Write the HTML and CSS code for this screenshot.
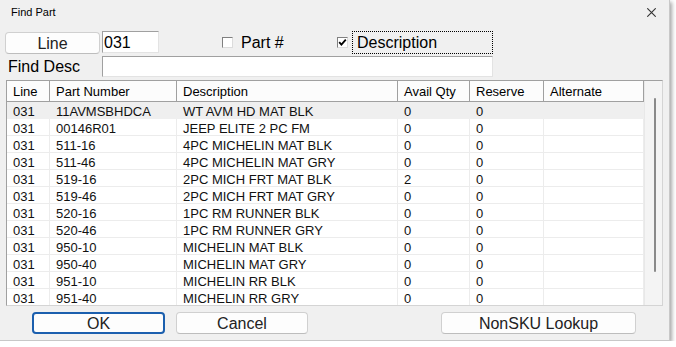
FILE: index.html
```html
<!DOCTYPE html>
<html lang="en">
<head>
    <meta charset="UTF-8">
    <title>Find Part</title>
    <link rel="stylesheet" href="styles.css">
</head>
<body>
    <div class="window">
        <div class="titlebar">
            <span class="title">Find Part</span>
            <svg class="close" width="9" height="9" viewBox="0 0 9 9">
                <path d="M0.3 0.3L8.7 8.7M8.7 0.3L0.3 8.7" stroke="#333" stroke-width="1.1" fill="none"/>
            </svg>
        </div>

        <div class="search-row">
            <button class="btn line-btn">Line</button>
            <input class="field line-field" value="031">
            <div class="check check-part">
                <span class="box"></span>
                <span class="check-text">Part #</span>
            </div>
            <div class="check check-desc">
                <span class="box">
                    <svg width="9" height="9" viewBox="0 0 9 9">
                        <path d="M1.2 4.2L3.4 6.6L7.8 1.6" stroke="#000" stroke-width="1.8" fill="none"/>
                    </svg>
                </span>
                <span class="check-text focus">Description</span>
            </div>
        </div>

        <div class="search-row desc-row">
            <span class="find-label">Find Desc</span>
            <input class="field desc-field" value="">
        </div>

        <div class="grid">
            <div class="grid-main">
                <table class="parts">
                    <colgroup>
                        <col style="width:43px">
                        <col style="width:127px">
                        <col style="width:221px">
                        <col style="width:72px">
                        <col style="width:74px">
                        <col style="width:100px">
                    </colgroup>
                    <thead>
                        <tr>
                            <th>Line</th>
                            <th>Part Number</th>
                            <th>Description</th>
                            <th>Avail Qty</th>
                            <th>Reserve</th>
                            <th>Alternate</th>
                        </tr>
                    </thead>
                    <tbody>
                        <tr class="selected"><td>031</td><td>11AVMSBHDCA</td><td>WT AVM HD MAT BLK</td><td>0</td><td>0</td><td></td></tr>
                        <tr><td>031</td><td>00146R01</td><td>JEEP ELITE 2 PC FM</td><td>0</td><td>0</td><td></td></tr>
                        <tr><td>031</td><td>511-16</td><td>4PC MICHELIN MAT BLK</td><td>0</td><td>0</td><td></td></tr>
                        <tr><td>031</td><td>511-46</td><td>4PC MICHELIN MAT GRY</td><td>0</td><td>0</td><td></td></tr>
                        <tr><td>031</td><td>519-16</td><td>2PC MICH FRT MAT BLK</td><td>2</td><td>0</td><td></td></tr>
                        <tr><td>031</td><td>519-46</td><td>2PC MICH FRT MAT GRY</td><td>0</td><td>0</td><td></td></tr>
                        <tr><td>031</td><td>520-16</td><td>1PC RM RUNNER BLK</td><td>0</td><td>0</td><td></td></tr>
                        <tr><td>031</td><td>520-46</td><td>1PC RM RUNNER GRY</td><td>0</td><td>0</td><td></td></tr>
                        <tr><td>031</td><td>950-10</td><td>MICHELIN MAT BLK</td><td>0</td><td>0</td><td></td></tr>
                        <tr><td>031</td><td>950-40</td><td>MICHELIN MAT GRY</td><td>0</td><td>0</td><td></td></tr>
                        <tr><td>031</td><td>951-10</td><td>MICHELIN RR BLK</td><td>0</td><td>0</td><td></td></tr>
                        <tr><td>031</td><td>951-40</td><td>MICHELIN RR GRY</td><td>0</td><td>0</td><td></td></tr>
                    </tbody>
                </table>
            </div>
            <div class="scroll">
                <div class="thumb"></div>
            </div>
        </div>

        <div class="actions">
            <button class="btn ok-btn">OK</button>
            <button class="btn cancel-btn">Cancel</button>
            <button class="btn nonsku-btn">NonSKU Lookup</button>
        </div>
    </div>
</body>
</html>
```

FILE: styles.css
```css
body {
    margin: 0;
    background: #fff;
    font-family: "Liberation Sans", Arial, sans-serif;
    color: #000;
}
.window {
    width: 670px;
    height: 341px;
    box-sizing: border-box;
    background: #f0f0f0;
    border-right: 1px solid #c8c8c8;
    border-bottom: 1px solid #c8c8c8;
    box-shadow: 2px 2px 4px rgba(0,0,0,0.35);
    display: flex;
    flex-direction: column;
}
.titlebar {
    height: 31px;
    display: flex;
    align-items: flex-start;
    flex-shrink: 0;
}
.title {
    font-size: 11px;
    line-height: 14px;
    margin: 5px 0 0 11px;
}
.close {
    margin: 8px 13px 0 auto;
}

/* search rows */
.search-row {
    display: flex;
    align-items: flex-start;
    height: 23px;
    padding-left: 5px;
    flex-shrink: 0;
}
.btn {
    box-sizing: border-box;
    height: 22px;
    padding: 2px 0 0;
    background: #fdfdfd;
    border: 1px solid #d0d0d0;
    border-bottom-color: #bdbdbd;
    border-radius: 4px;
    font-family: "Liberation Sans", Arial, sans-serif;
    font-size: 16px;
    line-height: 18px;
    color: #222;
}
.line-btn {
    width: 95px;
    margin-top: 1px;
}
.field {
    box-sizing: border-box;
    height: 22px;
    margin: 0;
    padding: 1px 1px 0;
    background: #fff;
    border: 1px solid #e3e3e3;
    border-top-color: #a0a0a0;
    border-left-color: #a0a0a0;
    font-family: "Liberation Sans", Arial, sans-serif;
    font-size: 16px;
    color: #000;
    outline: none;
}
.line-field {
    width: 57px;
    margin-left: 2px;
}
.check {
    display: flex;
    align-items: center;
    height: 23px;
    font-size: 16px;
}
.check-part {
    width: 115px;
    margin-left: 63px;
}
.box {
    box-sizing: border-box;
    width: 11px;
    height: 11px;
    background: #fff;
    border: 1px solid #dcdcdc;
    border-top-color: #808080;
    border-left-color: #808080;
    display: flex;
    align-items: center;
    justify-content: center;
}
.check-part .check-text {
    margin-left: 8px;
}
.check-text.focus {
    box-sizing: border-box;
    width: 141px;
    height: 23px;
    margin-left: 4px;
    padding-left: 4px;
    border: 1px dotted #000;
    line-height: 21px;
}
.desc-row {
    margin-top: 2px;
    height: 21px;
}
.find-label {
    width: 94px;
    padding-left: 3px;
    font-size: 16px;
    line-height: 22px;
}
.desc-field {
    width: 391px;
    height: 21px;
}

/* grid */
.grid {
    box-sizing: border-box;
    width: 657px;
    height: 226px;
    margin: 3px 0 0 6px;
    border: 1px solid #d4d4d4;
    border-top-color: #a0a0a0;
    border-left-color: #a0a0a0;
    background: #fff;
    display: flex;
    flex-shrink: 0;
}
.grid-main {
    width: 637px;
    overflow: hidden;
}
.parts {
    table-layout: fixed;
    width: 637px;
    border-collapse: separate;
    border-spacing: 0;
    font-size: 13px;
}
.parts th {
    box-sizing: border-box;
    height: 21px;
    padding: 1px 6px 0;
    background: #fcfcfc;
    border-right: 1px solid #a0a0a0;
    border-bottom: 1px solid #a0a0a0;
    font-weight: normal;
    text-align: left;
    white-space: nowrap;
    line-height: 19px;
}
.parts td {
    box-sizing: border-box;
    height: 17px;
    padding: 3px 6px 0;
    border-right: 1px solid #ececec;
    border-bottom: 1px solid #ececec;
    line-height: 13px;
    white-space: nowrap;
    overflow: hidden;
    color: #111;
}
.parts tr.selected td {
    background: #efefef;
    border-color: #efefef;
}
.scroll {
    flex: 1;
    background: #f4f4f4;
    border-left: 1px solid #e8e8e8;
}
.thumb {
    width: 2px;
    height: 174px;
    margin: 17px 0 0 9px;
    background: #8a8a8a;
    border-radius: 1px;
}

/* buttons */
.actions {
    display: flex;
    margin-top: 6px;
}
.ok-btn {
    width: 133px;
    margin-left: 32px;
    border: 2px solid #1b5fae;
    padding-top: 1px;
}
.cancel-btn {
    width: 132px;
    margin-left: 11px;
}
.nonsku-btn {
    width: 195px;
    margin-left: 133px;
}
```
